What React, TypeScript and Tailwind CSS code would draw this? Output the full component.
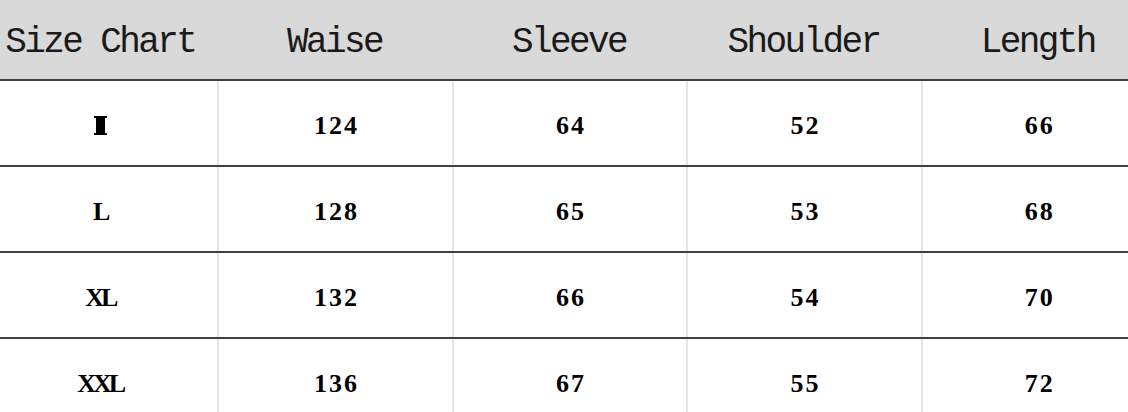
// Size chart table, cropped like the product image: the first and last columns
// run past the frame edges.

type Row = {
  size: string;
  values: number[];
};

const HEADERS = ["Size Chart", "Waise", "Sleeve", "Shoulder", "Length"];

const ROWS: Row[] = [
  { size: "M", values: [124, 64, 52, 66] },
  { size: "L", values: [128, 65, 53, 68] },
  { size: "XL", values: [132, 66, 54, 70] },
  { size: "XXL", values: [136, 67, 55, 72] },
];

// The "M" in the source renders as a missing-glyph block.
function TofuM() {
  return (
    <span aria-label="M" className="inline-flex h-[19px] w-[13px] flex-col items-center">
      <span className="h-[2px] w-full bg-black" />
      <span className="w-[9px] flex-1 bg-black" />
      <span className="h-[2px] w-full bg-black" />
    </span>
  );
}

export default function App() {
  return (
    <div className="h-[412px] w-[1128px] overflow-hidden bg-white">
      <div className="ml-[-17px] w-[1172px]">
        <div className="grid h-[81px] grid-cols-5 border-b-2 border-[#404040] bg-[#d9d9d9] font-['Liberation_Mono',monospace] text-[36px] tracking-[-2.6px] text-[#1a1a1a]">
          {HEADERS.map((h) => (
            <div key={h} className="flex items-center justify-center pt-[6px]">
              {h}
            </div>
          ))}
        </div>
        {ROWS.map((r) => (
          <div
            key={r.size}
            className="grid h-[86px] grid-cols-5 border-b-2 border-[#404040] font-['Liberation_Serif',serif] font-bold text-black"
          >
            <div className="flex items-center justify-center pt-[5px] text-[26px] tracking-[-3px]">
              {r.size === "M" ? <TofuM /> : r.size}
            </div>
            {r.values.map((v, i) => (
              <div
                key={i}
                className="flex items-center justify-center border-l-2 border-[#e6e6e6] pt-[5px] pl-[2px] text-[26px] tracking-[2px]"
              >
                {v}
              </div>
            ))}
          </div>
        ))}
      </div>
    </div>
  );
}
